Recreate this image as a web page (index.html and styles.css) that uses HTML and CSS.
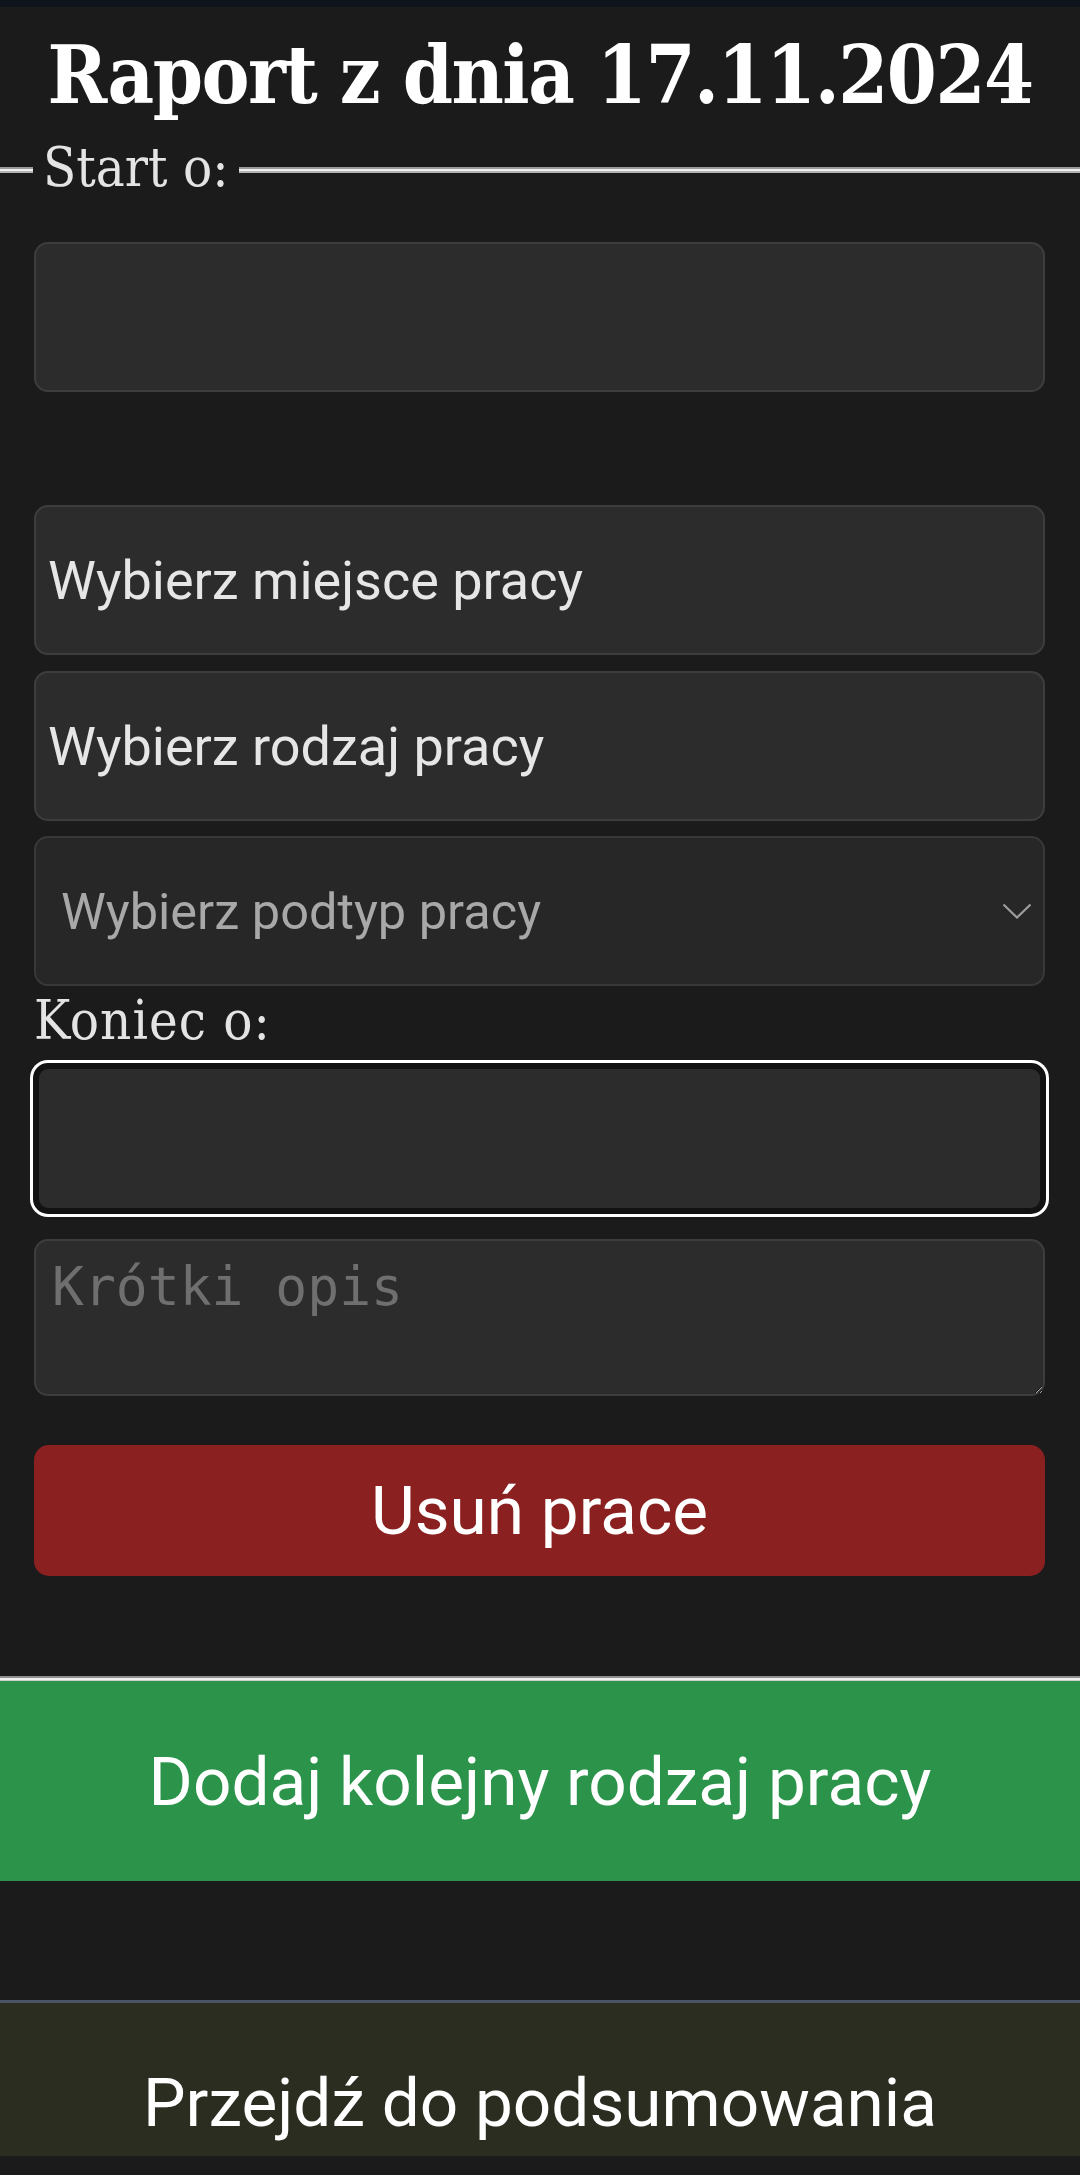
FILE: index.html
```html
<!DOCTYPE html>
<html lang="pl">
<head>
<meta charset="utf-8">
<title>Raport z dnia 17.11.2024</title>
<link rel="stylesheet" href="styles.css">
</head>
<body>
<div class="statusbar"></div>
<h1 class="title">Raport z dnia 17.11.2024</h1>
<section class="work">
  <div class="legend"><span class="legend-text">Start o:</span></div>
  <input class="field" type="text" aria-label="Start o">
  <div class="choice choice-first">Wybierz miejsce pracy</div>
  <div class="choice">Wybierz rodzaj pracy</div>
  <div class="select-wrap">
    <select class="select" aria-label="Podtyp pracy"><option>Wybierz podtyp pracy</option></select>
    <svg class="chevron" width="30" height="16" viewBox="0 0 30 16"><path d="M1.5 1.5 L15 14.5 L28.5 1.5" fill="none" stroke="#9d9d9d" stroke-width="2.2"/></svg>
  </div>
  <label class="label">Koniec o:</label>
  <input class="field field-focus" type="text" aria-label="Koniec o">
  <textarea class="desc" placeholder="Krótki opis"></textarea>
  <button class="btn-remove" type="button">Usuń prace</button>
  <div class="rule"></div>
</section>
<button class="btn-add" type="button">Dodaj kolejny rodzaj pracy</button>
<a class="btn-summary" href="#">Przejdź do podsumowania</a>
</body>
</html>
```
FILE: styles.css
```css
html, body {
  margin: 0;
  padding: 0;
  background: #1b1b1b;
}
body {
  width: 1080px;
  font-family: Roboto, "Noto Sans", sans-serif;
  color: #e6e6e6;
}
.statusbar {
  height: 7px;
  background: #0f141c;
}
.title {
  margin: 0;
  padding-top: 18px;
  height: 100px;
  line-height: 100px;
  text-align: center;
  font-family: "DejaVu Serif Condensed", "DejaVu Serif", serif;
  font-stretch: condensed;
  font-weight: bold;
  font-size: 80px;
  letter-spacing: -1.5px;
  color: #ffffff;
  white-space: nowrap;
}
.work {
  display: block;
}
.legend {
  display: flex;
  align-items: flex-start;
  height: 64px;
  margin-top: 11px;
}
.legend::before,
.legend::after {
  content: "";
  height: 2px;
  margin-top: 31px;
  border-top: 2px solid #9a9a9a;
  border-bottom: 2px solid #b4b4b4;
  background: #f0f0f0;
}
.legend::before {
  width: 33px;
}
.legend::after {
  flex: 1;
}
.legend-text,
.label {
  font-family: "DejaVu Serif Condensed", "DejaVu Serif", serif;
  font-stretch: condensed;
  font-size: 54px;
  line-height: 64px;
  color: #e4e4e4;
}
.legend-text {
  padding: 0 10px;
}
.field {
  display: block;
  box-sizing: border-box;
  width: 1011px;
  height: 150px;
  margin: 42px 0 0 34px;
  padding: 0;
  background: #2c2c2c;
  border: 2px solid #3d3d3d;
  border-radius: 14px;
  outline: none;
}
.field-focus {
  width: 1013px;
  height: 151px;
  margin: 10px 0 0 33px;
  border: 6px solid #121212;
  border-radius: 15px;
  box-shadow: 0 0 0 3px #ffffff;
}
.choice {
  box-sizing: border-box;
  display: flex;
  align-items: center;
  width: 1011px;
  height: 150px;
  margin: 16px 0 0 34px;
  padding-left: 12px;
  background: #2c2c2c;
  border: 2px solid #3d3d3d;
  border-radius: 14px;
  font-size: 54px;
  color: #e6e6e6;
}
.choice-first {
  margin-top: 113px;
}
.select-wrap {
  position: relative;
  width: 1011px;
  height: 150px;
  margin: 15px 0 0 34px;
}
.select {
  -webkit-appearance: none;
  appearance: none;
  box-sizing: border-box;
  width: 100%;
  height: 100%;
  margin: 0;
  padding: 0 0 0 25px;
  background: #272727;
  border: 2px solid #383838;
  border-radius: 14px;
  font-family: Roboto, sans-serif;
  font-size: 50.5px;
  color: #a8a8a8;
  outline: none;
}
.chevron {
  position: absolute;
  right: 13px;
  top: 67px;
  pointer-events: none;
}
.label {
  display: block;
  margin: 3px 0 0 34px;
  height: 64px;
  letter-spacing: 1px;
}
.desc {
  display: block;
  box-sizing: border-box;
  width: 1011px;
  height: 157px;
  margin: 25px 0 0 34px;
  padding: 15px 16px;
  background: #2c2c2c;
  border: 2px solid #3d3d3d;
  border-radius: 14px;
  font-family: "DejaVu Sans Mono", monospace;
  font-size: 53px;
  color: #e6e6e6;
  resize: vertical;
  outline: none;
}
.desc::placeholder {
  color: #6f6f6f;
}
.btn-remove {
  display: block;
  width: 1011px;
  height: 131px;
  margin: 49px 0 0 34px;
  padding: 0;
  background: #8b2020;
  border: 0;
  border-radius: 15px;
  font-family: Roboto, sans-serif;
  font-size: 67.5px;
  color: #ffffff;
}
.rule {
  height: 2px;
  margin-top: 100px;
  border-top: 2px solid #8f8f8f;
  border-bottom: 1px solid #cfcfcf;
  background: #f2f2f2;
}
.btn-add {
  display: block;
  width: 100%;
  height: 200px;
  margin: 0;
  padding: 0;
  background: #2b934a;
  border: 0;
  font-family: Roboto, sans-serif;
  font-size: 67.5px;
  color: #ffffff;
}
.btn-summary {
  display: block;
  box-sizing: border-box;
  height: 156px;
  margin-top: 119px;
  padding-top: 60px;
  background: #2c2d21;
  border-top: 3px solid #4a5366;
  text-align: center;
  text-decoration: none;
  font-family: Roboto, sans-serif;
  font-size: 67.5px;
  color: #ffffff;
}
```
